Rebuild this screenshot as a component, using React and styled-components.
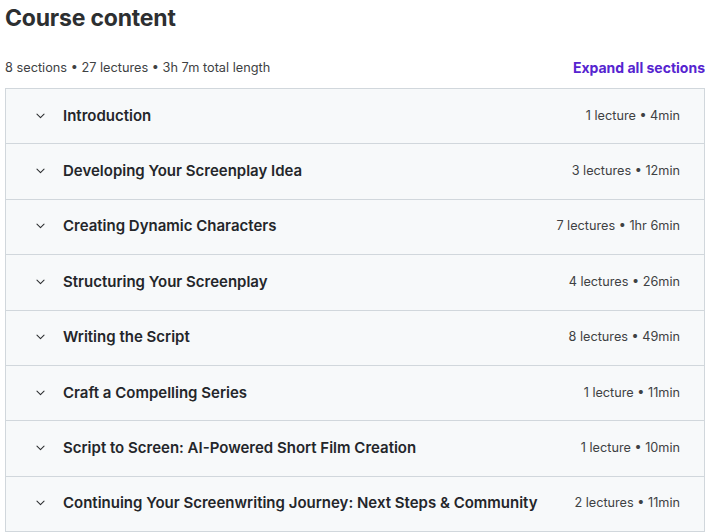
import React from "react";
import styled, { createGlobalStyle } from "styled-components";

const sections = [
  { title: "Introduction", meta: "1 lecture • 4min" },
  { title: "Developing Your Screenplay Idea", meta: "3 lectures • 12min" },
  { title: "Creating Dynamic Characters", meta: "7 lectures • 1hr 6min" },
  { title: "Structuring Your Screenplay", meta: "4 lectures • 26min" },
  { title: "Writing the Script", meta: "8 lectures • 49min" },
  { title: "Craft a Compelling Series", meta: "1 lecture • 11min" },
  { title: "Script to Screen: AI-Powered Short Film Creation", meta: "1 lecture • 10min" },
  {
    title: "Continuing Your Screenwriting Journey: Next Steps & Community",
    meta: "2 lectures • 11min",
  },
];

export default function App() {
  return (
    <>
      <GlobalStyle />
      <Page>
        <Heading>Course content</Heading>
        <SummaryBar>
          <Summary>8 sections • 27 lectures • 3h 7m total length</Summary>
          <ExpandButton>Expand all sections</ExpandButton>
        </SummaryBar>
        <Accordion>
          {sections.map((s) => (
            <Row key={s.title}>
              <Chevron viewBox="0 0 24 24">
                <path d="M7 10l5 5 5-5" />
              </Chevron>
              <Title>{s.title}</Title>
              <Meta>{s.meta}</Meta>
            </Row>
          ))}
        </Accordion>
      </Page>
    </>
  );
}

const GlobalStyle = createGlobalStyle`
  body {
    margin: 0;
    background: #fff;
    font-family: Inter, "Noto Sans", sans-serif;
    color: #2d2f31;
  }
`;

const Page = styled.div`
  width: 700px;
  padding-left: 5px;
`;

const Heading = styled.h2`
  margin: 0;
  padding-top: 3px;
  font-size: 23px;
  line-height: 30px;
  font-weight: 700;
  letter-spacing: -0.2px;
`;

const SummaryBar = styled.div`
  display: flex;
  justify-content: space-between;
  align-items: center;
  margin-top: 24px;
  height: 20px;
  margin-bottom: 11px;
`;

const Summary = styled.span`
  font-size: 12.75px;
  color: #3e4143;
`;

const ExpandButton = styled.button`
  border: none;
  background: none;
  padding: 0;
  font-family: inherit;
  font-size: 14px;
  font-weight: 700;
  color: #5624d0;
  cursor: pointer;
`;

const Accordion = styled.div`
  border: 1px solid #d1d7dc;
  border-bottom: none;
`;

const Row = styled.div`
  display: flex;
  align-items: center;
  box-sizing: border-box;
  height: 55.4px;
  padding: 0 24px 2px 26px;
  background: #f7f9fa;
  border-bottom: 1px solid #d1d7dc;
`;

const Chevron = styled.svg`
  width: 17px;
  height: 17px;
  fill: none;
  stroke: #2d2f31;
  stroke-width: 1.5;
  stroke-linecap: round;
  stroke-linejoin: round;
  flex: none;
`;

const Title = styled.span`
  flex: 1;
  margin-left: 14px;
  font-size: 15px;
  font-weight: 600;
  color: #24262a;
`;

const Meta = styled.span`
  font-size: 12.7px;
  color: #3e4143;
`;
